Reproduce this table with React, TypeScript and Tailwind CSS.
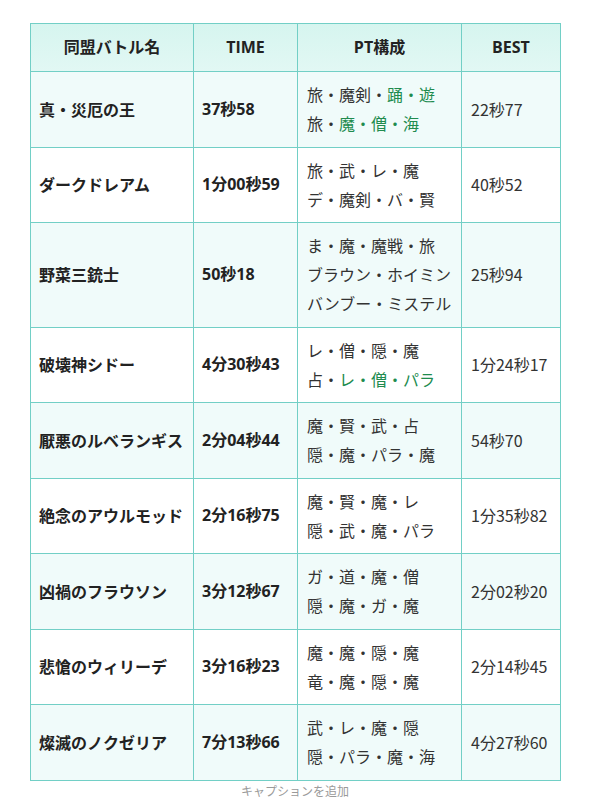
import React from "react";

type Row = {
  name: string;
  time: string;
  pt: React.ReactNode[];
  best: string;
};

const G = ({ children }: { children: React.ReactNode }) => (
  <span className="text-[#208b4e]">{children}</span>
);

const rows: Row[] = [
  {
    name: "真・災厄の王",
    time: "37秒58",
    pt: [
      <>旅・魔剣・<G>踊・遊</G></>,
      <>旅・<G>魔・僧・海</G></>,
    ],
    best: "22秒77",
  },
  { name: "ダークドレアム", time: "1分00秒59", pt: ["旅・武・レ・魔", "デ・魔剣・バ・賢"], best: "40秒52" },
  {
    name: "野菜三銃士",
    time: "50秒18",
    pt: ["ま・魔・魔戦・旅", "ブラウン・ホイミン", "バンブー・ミステル"],
    best: "25秒94",
  },
  {
    name: "破壊神シドー",
    time: "4分30秒43",
    pt: ["レ・僧・隠・魔", <>占・<G>レ・僧・パラ</G></>],
    best: "1分24秒17",
  },
  { name: "厭悪のルベランギス", time: "2分04秒44", pt: ["魔・賢・武・占", "隠・魔・パラ・魔"], best: "54秒70" },
  { name: "絶念のアウルモッド", time: "2分16秒75", pt: ["魔・賢・魔・レ", "隠・武・魔・パラ"], best: "1分35秒82" },
  { name: "凶禍のフラウソン", time: "3分12秒67", pt: ["ガ・道・魔・僧", "隠・魔・ガ・魔"], best: "2分02秒20" },
  { name: "悲愴のウィリーデ", time: "3分16秒23", pt: ["魔・魔・隠・魔", "竜・魔・隠・魔"], best: "2分14秒45" },
  { name: "燦滅のノクゼリア", time: "7分13秒66", pt: ["武・レ・魔・隠", "隠・パラ・魔・海"], best: "4分27秒60" },
];

const boldFont = { fontFamily: '"Open Sans", "Noto Sans CJK JP", sans-serif' };

export default function App() {
  return (
    <div
      className="min-h-[803px] w-[589px] bg-white pl-[30px] pt-[23px] text-[#333]"
      style={{ fontFamily: '"Noto Sans CJK JP", "Noto Sans", sans-serif' }}
    >
      <table className="w-[530px] table-fixed border-collapse text-[16px] leading-[29px]">
        <colgroup>
          <col className="w-[163px]" />
          <col className="w-[104px]" />
          <col className="w-[164px]" />
          <col className="w-[99px]" />
        </colgroup>
        <thead>
          <tr className="bg-gradient-to-b from-[#d6f5ef] to-[#e2f8f4]">
            {["同盟バトル名", "TIME", "PT構成", "BEST"].map((h) => (
              <th
                key={h}
                style={boldFont}
                className="border border-[#72cfc6] px-2 py-[9px] text-center font-bold text-[#222]"
              >
                {h}
              </th>
            ))}
          </tr>
        </thead>
        <tbody>
          {rows.map((r, i) => (
            <tr key={r.name} className={i % 2 === 0 ? "bg-[#f0fbfa]" : "bg-white"}>
              <td className="border border-[#72cfc6] px-2 py-[8.25px] align-middle font-bold text-[#222] whitespace-nowrap">
                {r.name}
              </td>
              <td
                style={boldFont}
                className="border border-[#72cfc6] px-2 py-[8.25px] align-middle font-bold text-[#222] whitespace-nowrap"
              >
                {r.time}
              </td>
              <td className="border border-[#72cfc6] px-[9px] py-[8.25px] align-middle whitespace-nowrap">
                {r.pt.map((p, j) => (
                  <div key={j}>{p}</div>
                ))}
              </td>
              <td className="border border-[#72cfc6] px-[9px] py-[8.25px] align-middle whitespace-nowrap">
                {r.best}
              </td>
            </tr>
          ))}
        </tbody>
      </table>
      <div className="mt-[2px] w-[530px] text-center text-[12px] leading-[16px] text-[#9a9a9a]">
        キャプションを追加
      </div>
    </div>
  );
}
